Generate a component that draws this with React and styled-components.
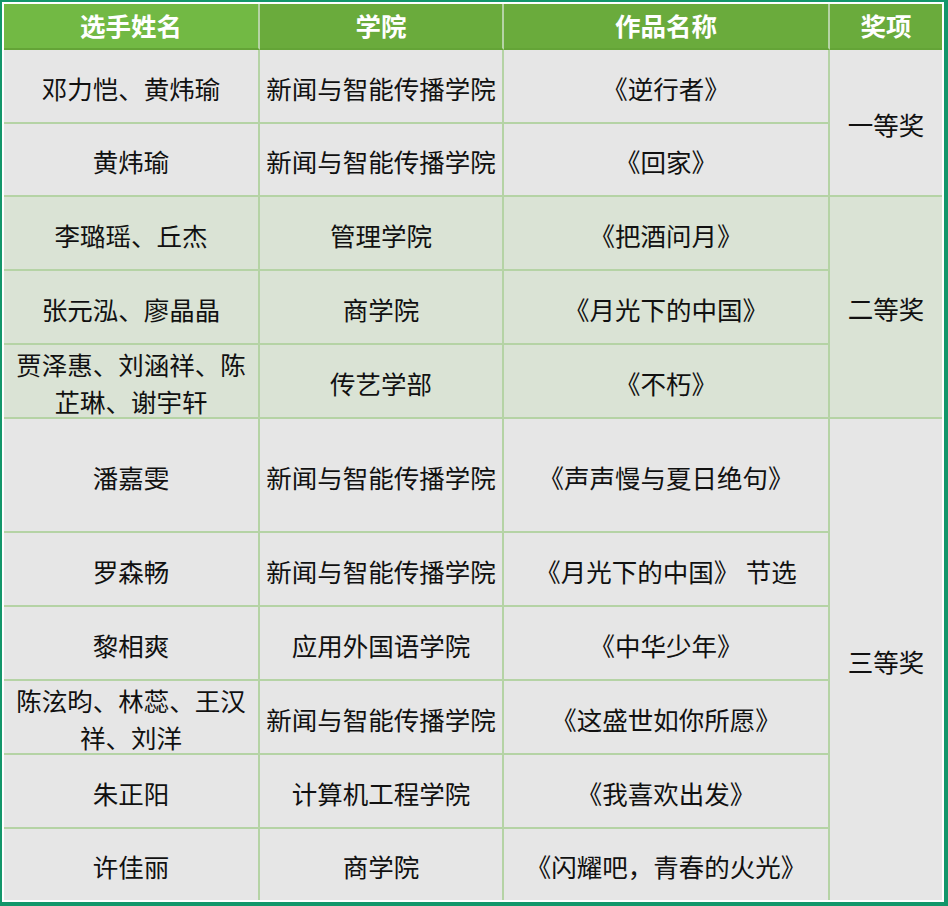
import React from "react";
import styled, { createGlobalStyle } from "styled-components";

const groups = [
  {
    award: "一等奖",
    tone: "gray",
    rows: [
      { name: "邓力恺、黄炜瑜", college: "新闻与智能传播学院", work: "《逆行者》", h: 74 },
      { name: "黄炜瑜", college: "新闻与智能传播学院", work: "《回家》", h: 73 },
    ],
  },
  {
    award: "二等奖",
    tone: "green",
    rows: [
      { name: "李璐瑶、丘杰", college: "管理学院", work: "《把酒问月》", h: 74 },
      { name: "张元泓、廖晶晶", college: "商学院", work: "《月光下的中国》", h: 74 },
      { name: "贾泽惠、刘涵祥、陈芷琳、谢宇轩", college: "传艺学部", work: "《不朽》", h: 74 },
    ],
  },
  {
    award: "三等奖",
    tone: "gray",
    rows: [
      { name: "潘嘉雯", college: "新闻与智能传播学院", work: "《声声慢与夏日绝句》", h: 114 },
      { name: "罗森畅", college: "新闻与智能传播学院", work: "《月光下的中国》 节选", h: 74 },
      { name: "黎相爽", college: "应用外国语学院", work: "《中华少年》", h: 74 },
      { name: "陈泫昀、林蕊、王汉祥、刘洋", college: "新闻与智能传播学院", work: "《这盛世如你所愿》", h: 74 },
      { name: "朱正阳", college: "计算机工程学院", work: "《我喜欢出发》", h: 74 },
      { name: "许佳丽", college: "商学院", work: "《闪耀吧，青春的火光》", h: 71 },
    ],
  },
];

const headers = ["选手姓名", "学院", "作品名称", "奖项"];

const tones = {
  gray: "#e6e6e6",
  green: "#dae3d5",
};

const rowHeights = groups.flatMap((g) => g.rows.map((r) => `${r.h}px`));
const lastGroup = groups.length - 1;

export default function App() {
  return (
    <>
      <GlobalStyle />
      <Frame>
        <Board $rows={rowHeights.join(" ")}>
          {headers.map((h, i) => (
            <HeadCell key={h} $first={i === 0} $last={i === headers.length - 1}>
              {h}
            </HeadCell>
          ))}
          {groups.map((g, gi) =>
            g.rows.map((r, ri) => {
              const bottom = gi === lastGroup && ri === g.rows.length - 1;
              return (
                <React.Fragment key={`${gi}-${ri}`}>
                  <Cell $tone={g.tone} $bottom={bottom}>
                    {r.name}
                  </Cell>
                  <Cell $tone={g.tone} $bottom={bottom}>
                    {r.college}
                  </Cell>
                  <Cell $tone={g.tone} $bottom={bottom}>
                    {r.work}
                  </Cell>
                  {ri === 0 && (
                    <AwardCell
                      $tone={g.tone}
                      $span={g.rows.length}
                      $bottom={gi === lastGroup}
                    >
                      {g.award}
                    </AwardCell>
                  )}
                </React.Fragment>
              );
            })
          )}
        </Board>
      </Frame>
    </>
  );
}

const GlobalStyle = createGlobalStyle`
  html, body {
    margin: 0;
    padding: 0;
    background: #ffffff;
  }
  * {
    box-sizing: border-box;
  }
`;

const Frame = styled.div`
  width: 948px;
  height: 906px;
  background: #ffffff;
  border-style: solid;
  border-color: #13966a;
  border-width: 2px 4px 4px 2px;
  padding: 2px;
  font-family: "Liberation Serif", "Noto Sans CJK SC", serif;
  color: #111111;
`;

const Board = styled.div`
  display: grid;
  grid-template-columns: 256px 244px 326px 112px;
  grid-template-rows: 46px ${(p) => p.$rows};
  width: 938px;
`;

const HeadCell = styled.div`
  display: flex;
  align-items: center;
  justify-content: center;
  padding-top: 4px;
  background: ${(p) => (p.$first ? "#72b944" : "#6aab3c")};
  border-right: ${(p) => (p.$last ? "none" : "2px solid #b5d3a5")};
  border-bottom: 2px solid #64a437;
  color: #ffffff;
  font-weight: bold;
  font-size: 25.5px;
  line-height: 30px;
`;

const Cell = styled.div`
  display: flex;
  align-items: center;
  justify-content: center;
  padding: 8px 6px 0;
  background: ${(p) => tones[p.$tone]};
  border-right: 2px solid #b5d3a5;
  border-bottom: ${(p) => (p.$bottom ? "none" : "2px solid #b5d3a5")};
  font-size: 25.5px;
  line-height: 37px;
  text-align: center;
`;

const AwardCell = styled.div`
  grid-row: span ${(p) => p.$span};
  display: flex;
  align-items: center;
  justify-content: center;
  padding-top: 7px;
  background: ${(p) => tones[p.$tone]};
  border-bottom: ${(p) => (p.$bottom ? "none" : "2px solid #b5d3a5")};
  font-size: 25.5px;
  line-height: 37px;
`;
